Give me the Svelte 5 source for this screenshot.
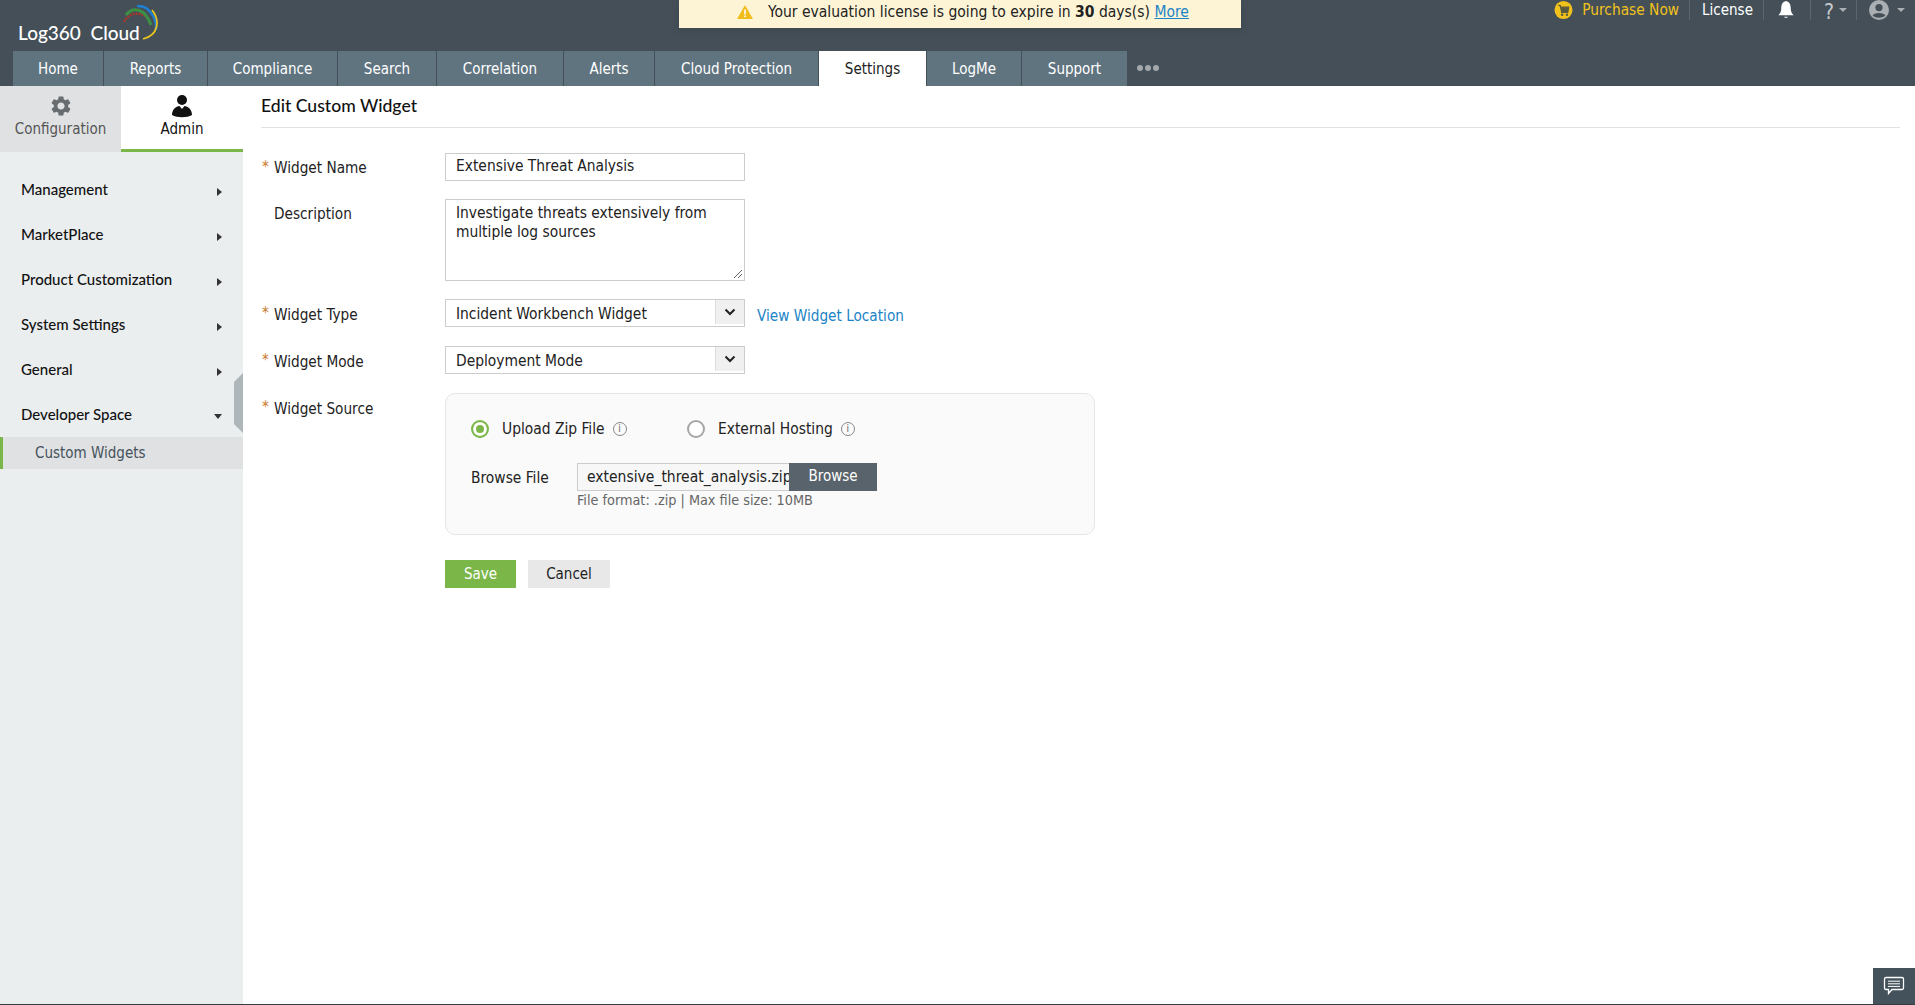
<script>
  const tabs = [
    { name: "Home", w: 91 },
    { name: "Reports", w: 104 },
    { name: "Compliance", w: 130 },
    { name: "Search", w: 99 },
    { name: "Correlation", w: 127 },
    { name: "Alerts", w: 91 },
    { name: "Cloud Protection", w: 164 },
    { name: "Settings", w: 108, active: true },
    { name: "LogMe", w: 95 },
    { name: "Support", w: 105 }
  ];

  const menu = ["Management", "MarketPlace", "Product Customization", "System Settings", "General"];
</script>

<div class="page">
  <header class="header">
    <div class="topbar">
      <div class="logo">
        <span>Log360&nbsp; Cloud</span>
        <svg class="logo__arc" viewBox="0 0 36 44" width="36" height="44">
          <path d="M1 17 C6 7 16 7 24 12" fill="none" stroke="#a8382a" stroke-width="2.5" stroke-dasharray="2 1" />
          <path d="M3 10 C10 1 22 3 28 20" fill="none" stroke="#3c8f45" stroke-width="3" />
          <path d="M14 1 C25 0 34 12 33 25" fill="none" stroke="#1f7fd0" stroke-width="2.6" />
          <path d="M29 5 C37 15 36 30 20 34" fill="none" stroke="#e8c21e" stroke-width="1.8" />
        </svg>
      </div>

      <div class="notice">
        <svg viewBox="0 0 16 14" width="16" height="14">
          <path d="M8 0 L16 14 H0 Z" fill="#f0bd1c" />
          <rect x="7.2" y="4.5" width="1.6" height="5" fill="#fff" />
          <rect x="7.2" y="10.5" width="1.6" height="1.6" fill="#fff" />
        </svg>
        <span>Your evaluation license is going to expire in <b>30</b> days(s) <a href="#more">More</a></span>
      </div>

      <div class="tools">
        <svg class="cart" viewBox="0 0 20 20" width="19" height="20">
          <circle cx="10" cy="10" r="9.5" fill="#f1c21b" />
          <path d="M4.5 5 H6.5 L8 12.5 H14.5 L15.5 7 H7" fill="#5b5a3d" stroke="#5b5a3d" stroke-width="1.2" />
          <circle cx="8.6" cy="15" r="1.3" fill="#5b5a3d" />
          <circle cx="13.6" cy="15" r="1.3" fill="#5b5a3d" />
        </svg>
        <span class="tools__buy">Purchase Now</span>
        <span class="tools__sep sep-license"></span>
        <span class="tools__license">License</span>
        <span class="tools__sep sep-bell"></span>
        <svg class="bell" viewBox="0 0 18 20" width="18" height="19">
          <path d="M9 0 C5 1 4 4 4 8 C4 11 3 13 1 15 H17 C15 13 14 11 14 8 C14 4 13 1 9 0 Z" fill="#fff" />
          <path d="M7 16.5 H11 C11 18.5 7 18.5 7 16.5 Z" fill="#d5d8da" />
        </svg>
        <span class="tools__sep sep-help"></span>
        <span class="tools__help">?</span>
        <span class="caret"></span>
        <span class="tools__sep sep-user"></span>
        <svg class="user" viewBox="0 0 20 20" width="20" height="20">
          <circle cx="10" cy="10" r="10" fill="#a9afb3" />
          <circle cx="10" cy="7.6" r="3.6" fill="#444f58" />
          <path d="M3.6 15.5 C5 12 15 12 16.4 15.5 C13 18.5 7 18.5 3.6 15.5 Z" fill="#444f58" />
        </svg>
        <span class="caret caret--user"></span>
      </div>
    </div>

    <nav class="nav">
      {#each tabs as tab}
        <div class="nav__tab" class:active={tab.active} style="width: {tab.w}px">{tab.name}</div>
      {/each}
      <div class="nav__more"><i></i><i></i><i></i></div>
    </nav>
  </header>

  <div class="body">
    <aside class="sidebar">
      <div class="sidebar__switch">
        <div class="switch__item">
          <svg viewBox="0 0 24 24" width="24" height="24">
            <path fill="#676c70" d="M19.14 12.94c.04-.3.06-.61.06-.94 0-.32-.02-.64-.07-.94l2.03-1.58a.49.49 0 0 0 .12-.61l-1.92-3.32a.488.488 0 0 0-.59-.22l-2.39.96c-.5-.38-1.03-.7-1.62-.94l-.36-2.54a.484.484 0 0 0-.48-.41h-3.84c-.24 0-.43.17-.47.41l-.36 2.54c-.59.24-1.13.57-1.62.94l-2.39-.96c-.22-.08-.47 0-.59.22L2.74 8.87c-.12.21-.08.47.12.61l2.03 1.58c-.05.3-.09.63-.09.94s.02.64.07.94l-2.03 1.58a.49.49 0 0 0-.12.61l1.92 3.32c.12.22.37.29.59.22l2.39-.96c.5.38 1.03.7 1.62.94l.36 2.54c.05.24.24.41.48.41h3.84c.24 0 .44-.17.47-.41l.36-2.54c.59-.24 1.13-.56 1.62-.94l2.39.96c.22.08.47 0 .59-.22l1.92-3.32c.12-.22.07-.47-.12-.61l-2.01-1.58zM12 15.6c-1.98 0-3.6-1.62-3.6-3.6s1.62-3.6 3.6-3.6 3.6 1.62 3.6 3.6-1.62 3.6-3.6 3.6z" />
          </svg>
          <span>Configuration</span>
        </div>
        <div class="switch__item active">
          <svg viewBox="0 0 24 24" width="24" height="24">
            <circle cx="12" cy="6" r="5" fill="#111" />
            <path d="M2 21 C2 15 6 12.5 9.5 12 L12 15 L14.5 12 C18 12.5 22 15 22 21 C17 24 7 24 2 21 Z" fill="#111" />
          </svg>
          <span>Admin</span>
        </div>
      </div>

      <ul class="menu">
        {#each menu as item}
          <li class="menu__item">{item}<span class="arrow-right"></span></li>
        {/each}
        <li class="menu__item">Developer Space<span class="arrow-down"></span></li>
        <li class="menu__sub">Custom Widgets</li>
      </ul>

      <div class="sidebar__handle"></div>
    </aside>

    <main class="content">
      <h1 class="title">Edit Custom Widget</h1>

      <form class="form">
        <div class="row row--name">
          <label class="req">Widget Name</label>
          <div class="input">Extensive Threat Analysis</div>
        </div>

        <div class="row row--desc">
          <label>Description</label>
          <div class="textarea">
            Investigate threats extensively from multiple log sources
            <svg class="grip" viewBox="0 0 10 10" width="10" height="10">
              <path d="M1 9 L9 1 M5 9 L9 5" stroke="#666" stroke-width="1" />
            </svg>
          </div>
        </div>

        <div class="row row--type">
          <label class="req">Widget Type</label>
          <div class="select">
            Incident Workbench Widget
            <span class="select__btn">
              <svg viewBox="0 0 12 8" width="12" height="8"><path d="M1.5 1.5 L6 6 L10.5 1.5" fill="none" stroke="#222" stroke-width="2" /></svg>
            </span>
          </div>
          <a class="link" href="#location">View Widget Location</a>
        </div>

        <div class="row row--mode">
          <label class="req">Widget Mode</label>
          <div class="select">
            Deployment Mode
            <span class="select__btn">
              <svg viewBox="0 0 12 8" width="12" height="8"><path d="M1.5 1.5 L6 6 L10.5 1.5" fill="none" stroke="#222" stroke-width="2" /></svg>
            </span>
          </div>
        </div>

        <div class="row row--source">
          <label class="req">Widget Source</label>
          <div class="panel">
            <div class="radios">
              <div class="radios__opt">
                <span class="radio radio--on"></span>
                <span class="radio__text">Upload Zip File</span>
                <span class="info">i</span>
              </div>
              <div class="radios__opt">
                <span class="radio radio--off"></span>
                <span class="radio__text">External Hosting</span>
                <span class="info">i</span>
              </div>
            </div>
            <div class="file">
              <span class="file__label">Browse File</span>
              <div>
                <div class="file__box">
                  <span class="file__name">extensive_threat_analysis.zip</span>
                  <span class="file__btn">Browse</span>
                </div>
                <div class="file__hint">File format: .zip | Max file size: 10MB</div>
              </div>
            </div>
          </div>
        </div>

        <div class="actions">
          <button type="button" class="btn btn--save">Save</button>
          <button type="button" class="btn btn--cancel">Cancel</button>
        </div>
      </form>
    </main>
  </div>

  <div class="chat">
    <svg viewBox="0 0 22 20" width="22" height="20">
      <path d="M3 1.5 H19 C20 1.5 20.5 2 20.5 3 V12 C20.5 13 20 13.5 19 13.5 H9 L5.5 17.5 V13.5 H3 C2 13.5 1.5 13 1.5 12 V3 C1.5 2 2 1.5 3 1.5 Z" fill="none" stroke="#fff" stroke-width="1.3" />
      <path d="M5 5.2 H17 M5 7.8 H17 M5 10.4 H17" stroke="#fff" stroke-width="1" />
    </svg>
  </div>
</div>

<style>
  :global(body) {
    margin: 0;
    background: #fff;
  }

  .page {
    position: relative;
    height: 1005px;
    display: flex;
    flex-direction: column;
    box-sizing: border-box;
    border-bottom: 1px solid #333c43;
    overflow: hidden;
    font-family: "DejaVu Sans Condensed", "DejaVu Sans", sans-serif;
    font-stretch: condensed;
    font-size: 15px;
    color: #222;
  }

  /* header */
  .header {
    height: 86px;
    flex: none;
    background: #444f58;
    display: flex;
    flex-direction: column;
  }

  .topbar {
    position: relative;
    height: 51px;
    flex: none;
  }

  .logo {
    position: absolute;
    left: 18px;
    top: 21px;
    font-family: "Lato", sans-serif;
    font-stretch: normal;
    font-size: 19px;
    font-weight: 500;
    color: #fff;
  }

  .logo__arc {
    position: absolute;
    left: 105px;
    top: -16px;
  }

  .notice {
    position: absolute;
    left: 679px;
    top: 0;
    width: 562px;
    height: 28px;
    box-sizing: border-box;
    padding: 0 0 4px 58px;
    display: flex;
    align-items: center;
    gap: 15px;
    font-size: 15.5px;
    background: #fdf4d6;
    color: #222;
    box-shadow: 0 2px 10px rgba(0, 0, 0, 0.12);
  }

  .notice a,
  .link {
    color: #1b83c6;
  }

  .link {
    text-decoration: none;
    margin-left: 12px;
    margin-top: 8px;
    font-size: 15.2px;
  }

  .tools {
    position: absolute;
    right: 0;
    top: 0;
    display: flex;
    align-items: center;
    height: 20px;
    padding-right: 10px;
  }

  .cart {
    margin-right: 9px;
  }

  .tools__buy {
    color: #f1c21b;
    font-size: 15.3px;
  }

  .tools__license {
    color: #fff;
  }

  .tools__sep {
    width: 1px;
    height: 20px;
    background: #5c666e;
  }

  .sep-license {
    margin: 0 12px 0 10px;
  }

  .sep-bell {
    margin: 0 13px 0 10px;
  }

  .sep-help {
    margin: 0 13px 0 15px;
  }

  .sep-user {
    margin: 0 12px 0 9px;
  }

  .tools__help {
    color: #c6cacd;
    font-size: 21px;
    line-height: 24px;
    margin-top: 4px;
  }

  .caret {
    margin-left: 5px;
    border-left: 4px solid transparent;
    border-right: 4px solid transparent;
    border-top: 4px solid #a9afb3;
  }

  .caret--user {
    margin-left: 8px;
  }

  .nav {
    margin-left: 13px;
    height: 35px;
    display: flex;
  }

  .nav__tab {
    box-sizing: border-box;
    display: flex;
    align-items: center;
    justify-content: center;
    background: #607480;
    color: #fff;
    border-right: 1px solid #444f58;
  }

  .nav__tab.active {
    background: #fff;
    color: #222;
  }

  .nav__tab:nth-child(10) {
    border-right: 0;
  }

  .nav__more {
    margin-left: 10px;
    display: flex;
    align-items: center;
    gap: 2px;
    height: 33px;
  }

  .nav__more i {
    width: 6px;
    height: 6px;
    border-radius: 50%;
    background: #a2a8ac;
  }

  /* sidebar */
  .body {
    flex: 1;
    display: flex;
    min-height: 0;
  }

  .sidebar {
    position: relative;
    width: 243px;
    flex: none;
    background: #ebeeef;
  }

  .sidebar__switch {
    display: grid;
    grid-template-columns: 121px 122px;
    height: 66px;
  }

  .switch__item {
    box-sizing: border-box;
    display: flex;
    flex-direction: column;
    align-items: center;
    padding-top: 8px;
    gap: 2px;
    background: #e0e1e3;
    color: #555;
  }

  .switch__item.active {
    background: #fff;
    color: #111;
    border-bottom: 3px solid #7ab648;
  }

  .menu {
    list-style: none;
    margin: 0;
    padding: 22px 0 0;
  }

  .menu__item {
    position: relative;
    height: 45px;
    box-sizing: border-box;
    padding: 6px 0 0 21px;
    font-family: "Lato", sans-serif;
    font-stretch: normal;
    font-size: 15px;
    font-weight: 500;
    color: #111;
  }

  .arrow-right {
    position: absolute;
    left: 217px;
    top: 14px;
    border-top: 4px solid transparent;
    border-bottom: 4px solid transparent;
    border-left: 5px solid #333;
  }

  .arrow-down {
    position: absolute;
    left: 214px;
    top: 15px;
    border-left: 4.5px solid transparent;
    border-right: 4.5px solid transparent;
    border-top: 5px solid #333;
  }

  .menu__sub {
    margin-top: -7px;
    height: 32px;
    line-height: 32px;
    box-sizing: border-box;
    padding-left: 32px;
    background: #e0e1e3;
    border-left: 3px solid #7ab648;
    color: #44525b;
  }

  .sidebar__handle {
    position: absolute;
    right: 0;
    top: 287px;
    width: 9px;
    height: 60px;
    background: #aeb6b9;
    clip-path: polygon(100% 0, 100% 100%, 0 85%, 0 15%);
  }

  /* form */
  .content {
    flex: 1;
    padding: 0 15px 0 18px;
  }

  .title {
    margin: 0;
    height: 42px;
    box-sizing: border-box;
    padding-top: 9px;
    border-bottom: 1px solid #e2e2e2;
    font-family: "Lato", sans-serif;
    font-stretch: normal;
    font-size: 17.6px;
    font-weight: 500;
    color: #111;
  }

  .form {
    padding-top: 25px;
  }

  .row {
    display: flex;
    align-items: flex-start;
    margin-bottom: 18px;
  }

  .row--type,
  .row--mode {
    margin-bottom: 19px;
  }

  .row--source {
    margin-bottom: 25px;
  }

  .row label {
    position: relative;
    width: 184px;
    flex: none;
    box-sizing: border-box;
    padding: 6px 0 0 13px;
    font-size: 15.2px;
  }

  .row--source label,
  .row--type label,
  .row--mode label {
    padding-top: 7px;
  }

  .req::before {
    content: "*";
    position: absolute;
    left: 1px;
    top: 5px;
    color: #c9772a;
  }

  .input,
  .select {
    position: relative;
    width: 300px;
    height: 28px;
    box-sizing: border-box;
    border: 1px solid #ccc;
    padding: 0 10px;
    line-height: 25px;
    font-size: 15.4px;
  }

  .select {
    line-height: 28px;
  }

  .select__btn {
    position: absolute;
    right: 0;
    top: 0;
    width: 28px;
    height: 24px;
    display: flex;
    align-items: center;
    justify-content: center;
    background: #f0f0f0;
    border-left: 1px solid #ddd;
  }

  .textarea {
    position: relative;
    width: 300px;
    height: 82px;
    box-sizing: border-box;
    border: 1px solid #ccc;
    padding: 4px 10px;
    line-height: 19px;
    font-size: 15.4px;
  }

  .grip {
    position: absolute;
    right: 1px;
    bottom: 1px;
  }

  .panel {
    width: 650px;
    height: 142px;
    box-sizing: border-box;
    padding: 25px 25px 0;
    background: #fafafa;
    border: 1px solid #e6e6e6;
    border-radius: 10px;
  }

  .radios {
    display: flex;
    height: 20px;
    font-size: 15.4px;
  }

  .radios__opt {
    display: flex;
    align-items: center;
    width: 216px;
  }

  .radio {
    width: 18px;
    height: 18px;
    box-sizing: border-box;
    border-radius: 50%;
    margin-right: 13px;
    background: #fff;
  }

  .radio--on {
    border: 2px solid #7ab648;
    box-shadow: inset 0 0 0 3px #fff, inset 0 0 0 8px #7ab648;
  }

  .radio--off {
    border: 2px solid #a6a6a6;
  }

  .radio__text {
    margin-right: 8px;
  }

  .info {
    width: 14px;
    height: 14px;
    box-sizing: border-box;
    border: 1px solid #888;
    border-radius: 50%;
    font-size: 10px;
    line-height: 12px;
    text-align: center;
    color: #666;
  }

  .file {
    display: flex;
    align-items: flex-start;
    margin-top: 24px;
  }

  .file__label {
    width: 106px;
    padding-top: 6px;
    font-size: 15.4px;
  }

  .file__box {
    display: flex;
    width: 300px;
    height: 28px;
  }

  .file__name {
    width: 212px;
    box-sizing: border-box;
    padding: 0 0 0 9px;
    line-height: 26px;
    white-space: nowrap;
    overflow: hidden;
    font-size: 15.5px;
    background: #f7f7f7;
    border: 1px solid #ccc;
    border-right: 0;
  }

  .file__btn {
    width: 88px;
    text-align: center;
    line-height: 26px;
    color: #fff;
    background: #59636b;
  }

  .file__hint {
    margin-top: 1px;
    font-size: 14.3px;
    color: #666;
  }

  .actions {
    display: flex;
    gap: 12px;
    margin-left: 184px;
  }

  .btn {
    height: 28px;
    border: 0;
    padding: 0;
    font: inherit;
  }

  .btn--save {
    width: 71px;
    color: #fff;
    background: #7ab648;
  }

  .btn--cancel {
    width: 82px;
    color: #222;
    background: #e8e8e8;
  }

  .chat {
    position: absolute;
    right: 0;
    bottom: 0;
    width: 42px;
    height: 36px;
    display: flex;
    align-items: center;
    justify-content: center;
    background: #44525b;
  }
</style>
